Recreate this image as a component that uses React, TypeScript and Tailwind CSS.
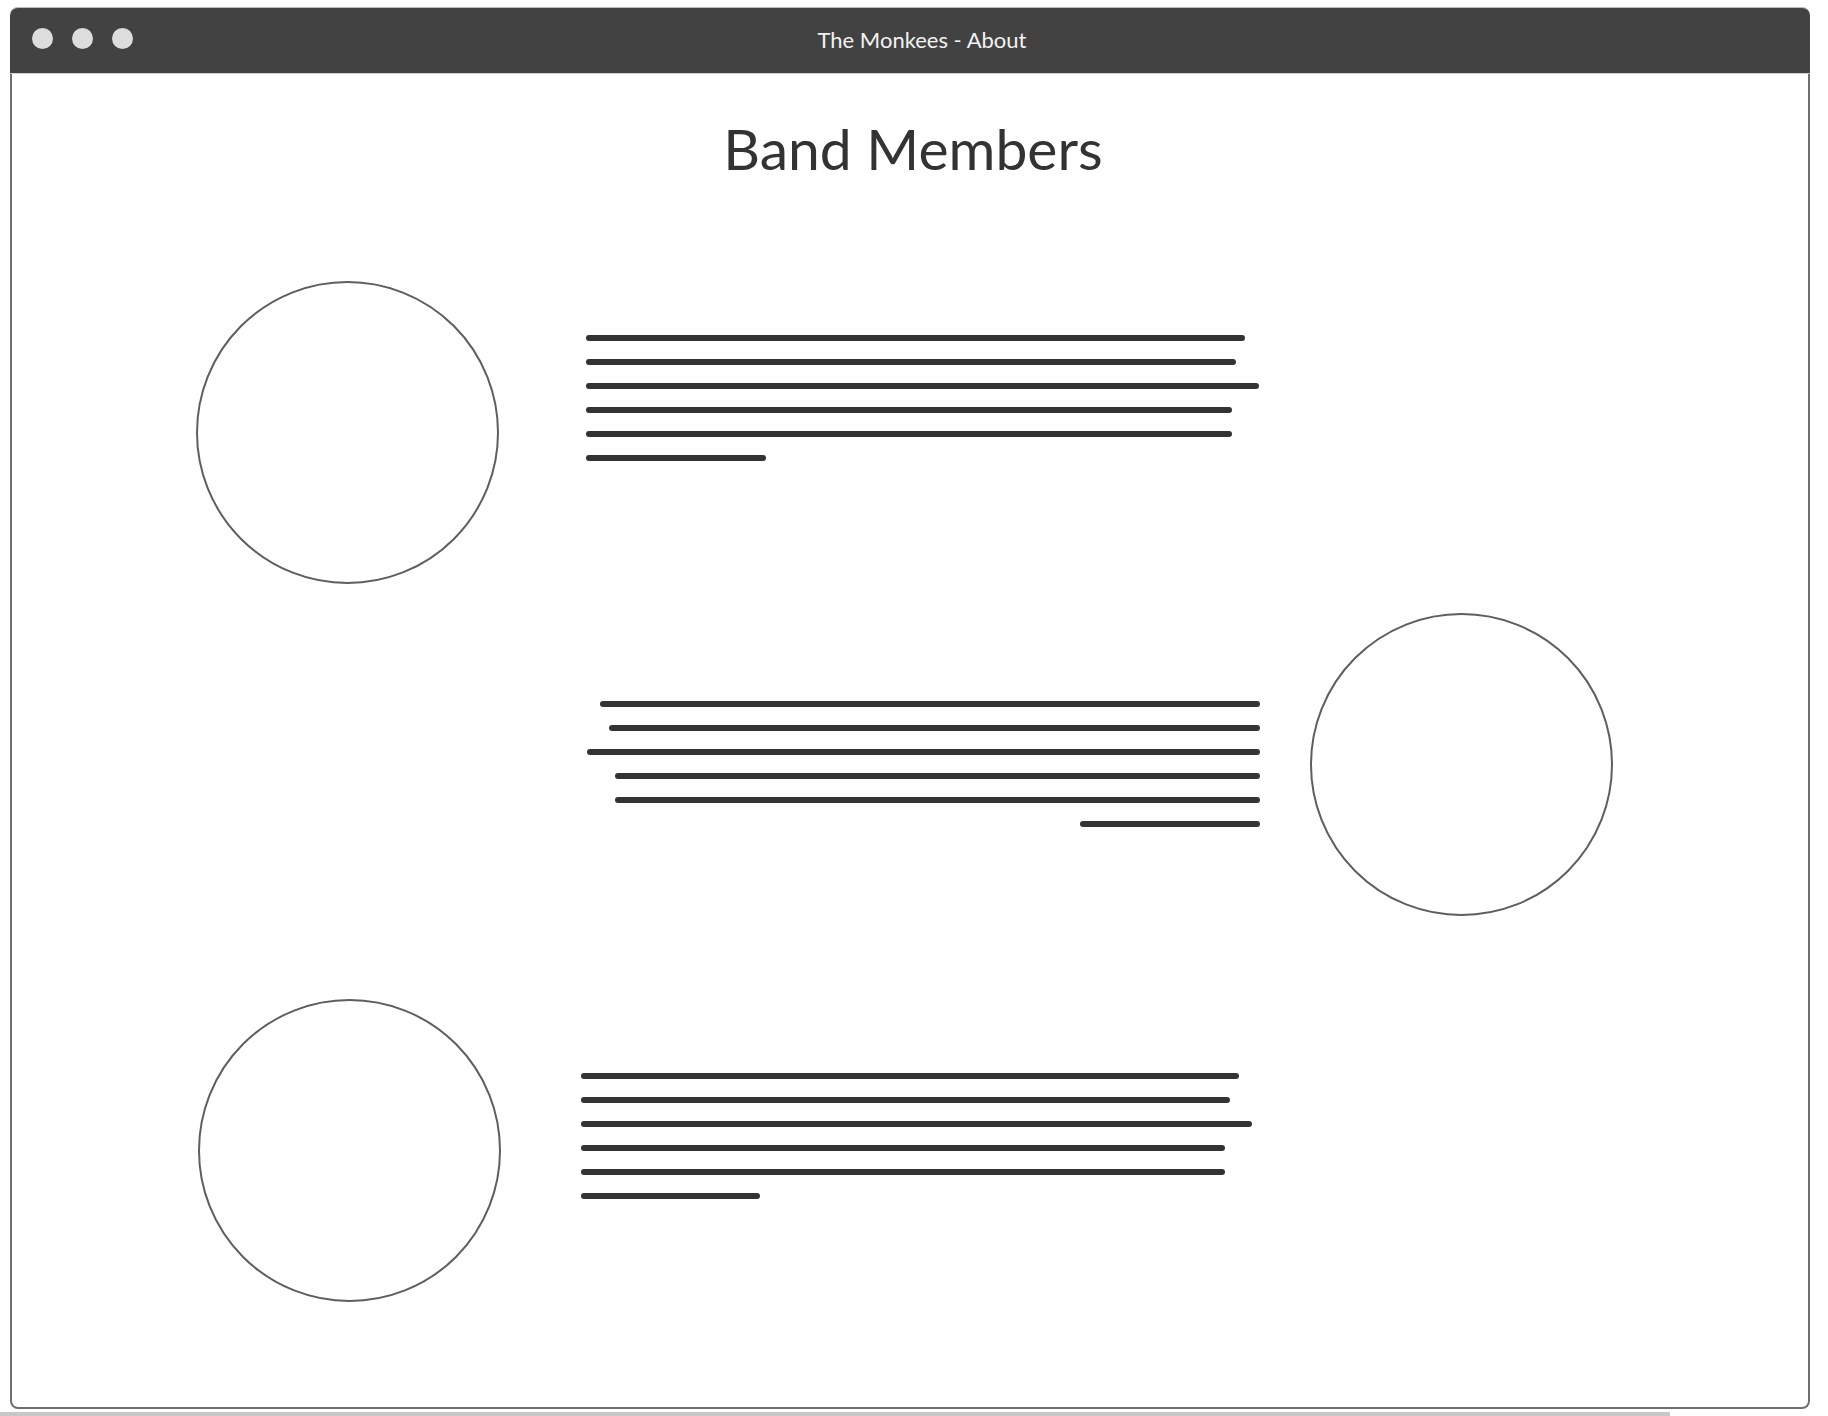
const lines1 = [659, 650, 673, 646, 646, 180];
const lines2 = [660, 651, 673, 645, 645, 180];
const lines3 = [658, 649, 671, 644, 644, 179];

function Circle() {
  return <div className="w-[303px] h-[303px] shrink-0 rounded-full border-2 border-[#5e5e5e]" />;
}

function Lines({ widths, right }: { widths: number[]; right?: boolean }) {
  return (
    <div className={`flex flex-col gap-[18px] ${right ? 'items-end' : 'items-start'}`}>
      {widths.map((w, i) => (
        <div key={i} className="h-[6px] rounded-full bg-[#333333]" style={{ width: w }} />
      ))}
    </div>
  );
}

export default function App() {
  return (
    <div className="w-[1828px] h-[1416px] bg-white overflow-hidden" style={{ fontFamily: 'Lato, "Open Sans", sans-serif' }}>
      <div className="pl-[10px] pt-[7px]">
        <div className="w-[1800px] h-[1402px] flex flex-col">
          {/* title bar */}
          <div className="h-[67px] shrink-0 flex items-start pt-[20px] bg-[#424242] rounded-t-[8px] border-t border-b border-t-[#bdbdbd] border-b-[#cfcfcf]">
            <div className="w-[160px] pl-[22px] flex gap-[19px]">
              <div className="w-[21px] h-[21px] rounded-full bg-[#dddddd]" />
              <div className="w-[21px] h-[21px] rounded-full bg-[#dddddd]" />
              <div className="w-[21px] h-[21px] rounded-full bg-[#dddddd]" />
            </div>
            <div className="flex-1 text-center text-[22px] leading-none text-[#f2f2f2] pt-[1px]">The Monkees - About</div>
            <div className="w-[136px]" />
          </div>

          {/* content */}
          <div className="flex-1 border-x-2 border-b-2 border-[#6e6e6e] rounded-b-[8px] bg-white">
            <div className="h-[207px] pt-[46px] pl-[6px] text-center">
              <h1 className="text-[57px] leading-none text-[#333333]">Band Members</h1>
            </div>

            <div className="flex items-start pl-[184px]">
              <Circle />
              <div className="ml-[87px] mt-[54px]">
                <Lines widths={lines1} />
              </div>
            </div>

            <div className="flex items-start pl-[575px] mt-[29px]">
              <div className="w-[673px] mt-[88px]">
                <Lines widths={lines2} right />
              </div>
              <div className="ml-[50px]">
                <Circle />
              </div>
            </div>

            <div className="flex items-start pl-[186px] mt-[83px]">
              <Circle />
              <div className="ml-[80px] mt-[74px]">
                <Lines widths={lines3} />
              </div>
            </div>
          </div>
        </div>
      </div>
      <div className="mt-[3px] w-[1670px] h-[4px] bg-[#c8c8c8]" />
    </div>
  );
}
